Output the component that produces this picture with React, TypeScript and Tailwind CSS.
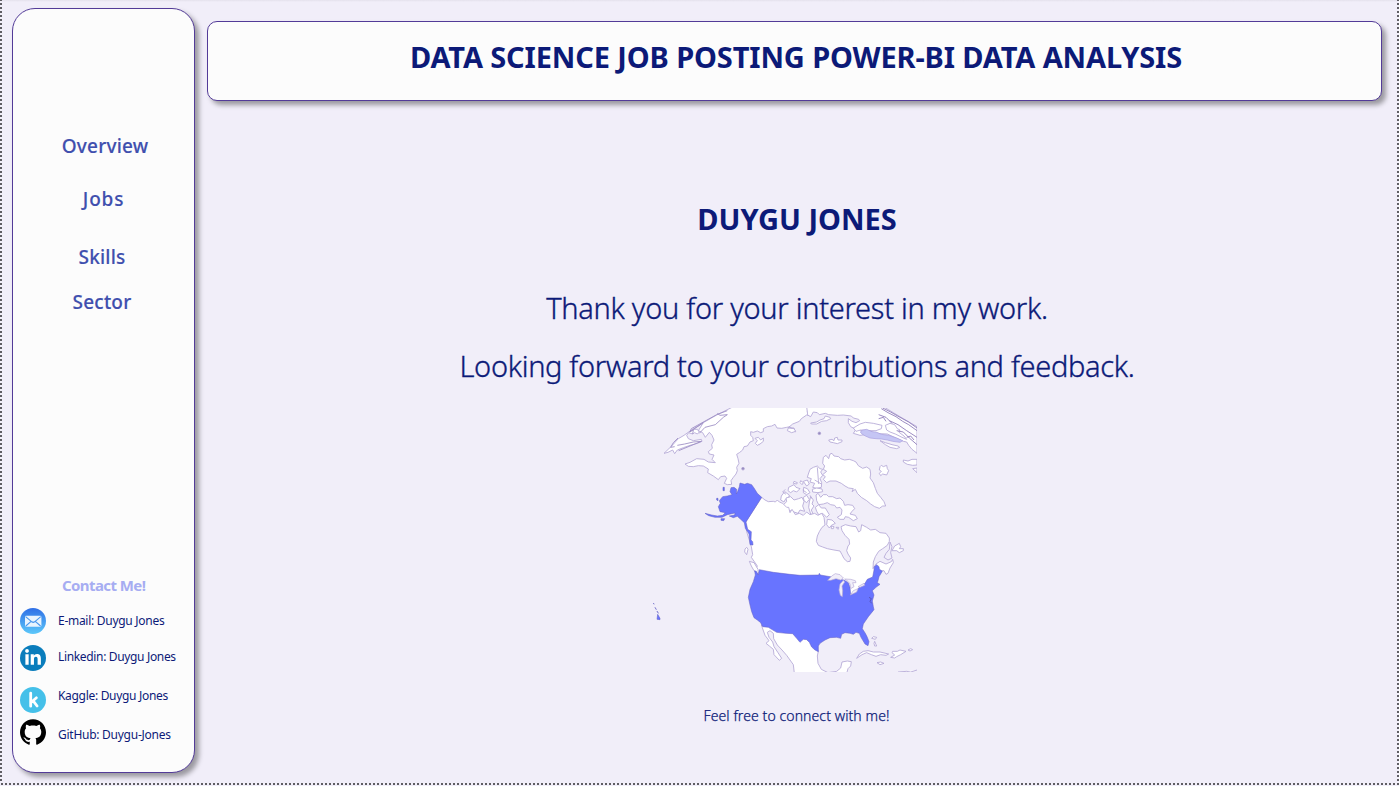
import { FaLinkedinIn } from "react-icons/fa";

const navItems = [
  { label: "Overview", cls: "mt-[123px] pl-[3px] tracking-[0.2px]" },
  { label: "Jobs", cls: "mt-[25px] tracking-[0.8px]" },
  { label: "Skills", cls: "mt-[30px] pr-[3px] tracking-[0.2px]" },
  { label: "Sector", cls: "mt-[17px] pr-[3px] tracking-[0.2px]" },
];

const contacts = [
  { label: "E-mail: Duygu Jones", cls: "tracking-[-0.28px]" },
  { label: "Linkedin: Duygu Jones", cls: "mt-[16px] tracking-[-0.34px]" },
  { label: "Kaggle: Duygu Jones", cls: "mt-[19px] tracking-[-0.31px]" },
  { label: "GitHub: Duygu-Jones", cls: "mt-[19px] tracking-[-0.26px]" },
];

function MailIcon() {
  return (
    <svg viewBox="0 0 26 26" className="size-[26px]">
      <defs>
        <linearGradient id="mail" x1="0" y1="0" x2="0" y2="1">
          <stop offset="0" stopColor="#2f6fe6" />
          <stop offset="1" stopColor="#5cc8fa" />
        </linearGradient>
      </defs>
      <circle cx="13" cy="13" r="13" fill="url(#mail)" />
      <rect x="5" y="7.7" width="16.4" height="11" rx="1.4" fill="#e9f4fe" />
      <path d="M5.6 8.6l6.2 5.2q1.4 1.1 2.8 0l6.2-5.2M5.8 18l5.3-4.7M20.6 18l-5.3-4.7" fill="none" stroke="#4796ee" strokeWidth="1.1" />
    </svg>
  );
}

function KaggleIcon() {
  return (
    <svg viewBox="0 0 26 26" className="size-[26px]">
      <circle cx="13" cy="13" r="13" fill="#45c0e9" />
      <path d="M10.7 6.2v13M16.4 10.8l-5 4.4M13.2 13.8l3.9 5.2" fill="none" stroke="#fff" strokeWidth="2.8" strokeLinecap="round" />
    </svg>
  );
}

function GithubIcon() {
  return (
    <svg viewBox="0 0 24 24" className="size-[26px]" fill="#000">
      <path d="M12 .297c-6.63 0-12 5.373-12 12 0 5.303 3.438 9.8 8.205 11.385.6.113.82-.258.82-.577 0-.285-.01-1.04-.015-2.04-3.338.724-4.042-1.61-4.042-1.61C4.422 18.07 3.633 17.7 3.633 17.7c-1.087-.744.084-.729.084-.729 1.205.084 1.838 1.236 1.838 1.236 1.07 1.835 2.809 1.305 3.495.998.108-.776.417-1.305.76-1.605-2.665-.3-5.466-1.332-5.466-5.93 0-1.31.465-2.38 1.235-3.22-.135-.303-.54-1.523.105-3.176 0 0 1.005-.322 3.3 1.23.96-.267 1.98-.399 3-.405 1.02.006 2.04.138 3 .405 2.28-1.552 3.285-1.23 3.285-1.23.645 1.653.24 2.873.12 3.176.765.84 1.23 1.91 1.23 3.22 0 4.61-2.805 5.625-5.475 5.92.42.36.81 1.096.81 2.22 0 1.606-.015 2.896-.015 3.286 0 .315.21.69.825.57C20.565 22.092 24 17.592 24 12.297c0-6.627-5.373-12-12-12" />
    </svg>
  );
}

function GlobeMap() {
  return (
    <svg viewBox="0 24 831 792" className="h-[264px] w-[277px]">
      <g fill="#fff" stroke="#b5a9d6" strokeWidth="2.6" strokeLinejoin="round">
        {/* Siberia and northern Russia */}
        <path d="M280 20L230 45 190 68 150 93 132 106 115 116 95 138 72 160 84 157 98 150 104 161 112 150 130 143 150 136 172 130 186 124 184 118 160 122 145 116 140 106 146 98 158 102 164 98 172 102 178 96 172 88 160 88 190 68 175 92 188 98 196 112 208 97 216 106 222 120 215 134 217 145 205 155 208 162 222 165 216 178 222 184 226 188 205 186 192 178 170 176 150 187 135 192 145 199 160 200 175 197 190 198 205 207 203 218 220 228 235 239 242 230 255 228 260 235 253 250 262 254 275 253 273 242 280 232 288 222 292 212 290 202 297 190 294 176 290 163 298 158 308 150 312 140 322 138 330 126 340 122 338 112 332 106 332 95 340 97 352 93 362 98 370 95 370 86 382 80 395 78 405 73 411 84 425 85 440 82 450 80 460 92 466 96 462 84 445 83 458 72 478 64 484 56 500 45 512 48 502 36 504 20Z" />
        {/* northern Europe up to the limb of the globe */}
        <path d="M500 20L503 45 512 50 520 36 532 38 538 44 556 40 566 44 592 46 610 45 634 48 640 54 656 58 659 62 648 68 636 64 625 56 625 68 632 80 648 88 640 100 660 106 675 104 665 97 662 90 680 90 700 97 720 101 742 102 770 115 790 124 800 126 806 136 816 148 831 160V80L790 56 760 38 730 20Z" />
        <path d="M640 84L660 72 676 67 700 70 726 76 724 86 708 92 688 92 662 90 648 94Z" />
        <path d="M720 122L736 128 756 134 774 138 779 142 770 146 750 142 736 134Z" />
        <path d="M736 76L750 70 764 74 772 86 780 90 776 96 792 108 800 118 786 112 766 102 750 96 740 90Z" />
        <path d="M724 26L744 38 768 50 788 64 806 74 831 92M728 24L752 36 780 52 806 66 831 84M716 44L738 52 756 70M748 62L774 74 800 92 831 112M770 92L790 96 808 114 831 134M800 112L812 108 822 120M716 56L730 52 738 64" fill="none" stroke="#8c7ab8" />
        <path d="M104 140L92 142 100 128 114 114M190 68L150 95 154 86 230 44 262 32M148 96L160 90 158 102M178 100L195 82 226 74 250 52 262 44 240 46 232 40M116 152L150 138 184 124 160 126 134 132 112 136" fill="none" stroke="#9c8dc4" />
        <path d="M790 180L804 183 816 178 831 178V195L818 196 802 193 790 186ZM818 206L831 204V218Z" />
        <path d="M512 69L530 66 540 60 552 56 556 48 570 52 572 56 560 62 545 64 530 72 514 72ZM445 84L462 86 467 94 455 98 442 92Z" />
        <path d="M345 115L355 112 362 120 370 114 370 124 360 132 352 136 346 130 352 122Z" />
        {/* Svalbard and Iceland */}
        <path d="M566 120L576 118 582 122 584 114 592 112 594 120 606 120 606 125 592 131 580 128 570 126Z" />
        <path d="M720 200L724 196 730 200 740 196 742 206 746 212 740 225 728 222 722 227 718 220 724 214 718 210Z" />
        <circle cx="538" cy="100" r="4" fill="#9489bd" />
        <circle cx="309" cy="206" r="4" fill="#9489bd" />
        {/* Greenland */}
        <path d="M548 190L550 172 558 166 566 176 570 162 576 160 582 168 596 170 602 176 614 180 628 178 640 182 648 186 655 197 668 205 680 201 690 208 692 222 690 234 700 248 706 265 712 280 722 292 732 305 737 318 728 318 718 325 704 320 692 312 680 302 664 292 652 280 646 268 636 275 640 266 626 264 615 258 604 250 588 243 570 243 560 248 550 238 556 230 548 224 560 214 550 208 554 198Z" />
        {/* Arctic archipelago */}
        <path d="M505 222L510 208 520 202 532 198 540 206 548 208 542 216 548 226 540 236 545 248 544 262 530 265 518 262 524 250 510 246 514 236 502 232Z" />
        <path d="M517 268L530 264 546 267 548 275 534 278 518 276ZM491 262L502 266 510 278 500 284 490 278ZM446 262L462 254 468 262 480 266 470 276 460 272 452 278 444 272ZM490 244L502 240 508 252 500 258ZM462 244L472 248 470 252 460 250ZM482 242L490 248 486 254 480 248Z" />
        <path d="M424 288L434 275 448 285 446 293 436 298 432 306 422 300Z" />
        <path d="M426 318L440 305 438 294 452 290 462 300 476 296 486 292 492 304 488 318 494 334 480 330 474 340 462 336 452 332 444 336 434 326Z" />
        <path d="M490 292L500 286 508 298 500 308 492 302ZM512 290L520 300 516 312 522 318 514 330 520 344 512 342 506 322 508 306ZM526 322L536 314 544 324 556 324 568 344 560 352 548 340 536 344 530 334Z" />
        <path d="M528 285L534 280 542 292 550 284 560 284 566 290 578 290 590 296 600 294 610 304 614 316 624 314 638 316 644 326 636 334 630 342 646 346 652 356 640 362 626 352 616 350 612 358 600 358 592 352 604 344 606 330 600 322 590 324 584 316 572 314 562 308 550 312 536 314 530 302Z" />
        <path d="M562 358L576 360 586 370 574 376 568 384 560 374ZM574 378L582 380 580 386 574 386ZM588 382L596 382 594 388Z" />
        {/* Canada */}
        <path d="M365 292L375 300 385 305 400 304 406 306 412 300 418 306 428 310 440 322 446 322 450 338 456 328 466 344 478 340 490 346 500 336 510 344 524 340 534 346 545 340 552 352 555 375 546 382 538 395 532 408 529 424 535 436 548 441 562 446 582 450 600 453 606 464 612 476 622 485 630 484 632 474 624 462 620 452 624 438 629 432 627 418 615 406 606 392 603 380 616 374 632 378 648 380 656 396 662 392 665 374 680 382 692 390 706 388 720 398 738 400 748 414 748 424 742 436 728 446 716 454 706 470 700 486 699 506 708 492 720 484 738 492 754 485 758 478 760 488 750 504 744 520 738 523 732 512 727 512 700 540 632 592 500 560 344 515 352 498 334 472 338 464 334 440 320 395 316 367Z" />
        <path d="M750 426L756 440 752 458 756 474 744 480 732 472 738 460 748 448Z" fill="#f1eef9" />
        <path d="M764 438L778 430 782 440 778 446 790 446 790 452 778 458 770 452 756 452Z" />
        <path d="M438 283L428 276 436 268M532 202L536 252M524 240L544 252M510 286L516 296M488 270L500 278" fill="none" />
        {/* Mexico and the Caribbean */}
        <path d="M364 675L375 706 387 722 378 730 388 738 400 748 402 764 418 781 425 775 414 758 402 740 398 726 387 712 382 697 390 692 400 700 401 716 412 735 426 750 440 766 450 780 460 794 463 820H620L624 806 632 798 634 785 622 783 606 786 602 804 590 814 564 818 544 808 534 790 532 768 535 753 500 700Z" />
        <path d="M650 775L658 762 670 754 684 752 700 756 720 756 746 762 738 766 722 764 708 769 694 764 680 758 666 764ZM752 772L764 765 756 758 758 754 772 754 780 750 798 754 782 764 770 770 764 774ZM711 788L722 786 732 790 720 794ZM804 750L812 746 818 749 810 753ZM695 715L706 718 710 712 700 710ZM704 724L710 738 704 738 702 730ZM774 816L800 814 812 816 831 810" />
        <path d="M315 447L320 442 324 448 320 464 314 456ZM328 484L342 488 354 508 355 523 342 512 334 498Z" />
      </g>
      <path d="M661 96L668 90 680 88 696 95 708 96 724 103 746 106 770 114 788 122 780 127 758 124 742 120 724 117 708 116 690 114 676 108 666 102Z" fill="#c5c5f4" stroke="#a89fe0" strokeWidth="2" />
      <g fill="#6874ff" stroke="#6460c4" strokeWidth="1.6" strokeLinejoin="round">
        <path d="M344 512L349 514 355 525 358 509 400 517 450 523 480 526 536 525 538 520 541 525 576 531 564 540 586 536 612 540 625 548 630 562 632 583 646 577 658 562 675 550 682 538 698 531 702 510 703 500 710 494 717 500 718 508 727 513 722 522 717 530 714 542 712 548 720 553 708 562 697 572 702 585 697 603 700 620 702 629 685 650 670 672 667 686 676 700 682 712 687 725 684 737 675 732 663 712 658 700 648 697 640 703 630 700 615 698 605 703 602 715 590 712 570 713 555 720 540 730 535 738 535 755 525 750 515 741 508 727 500 719 490 718 480 727 470 715 458 701 438 700 410 697 385 682 368 680 362 668 352 660 342 653 335 635 330 615 325 592 330 568 340 545 346 525Z" />
        <path d="M365 292L352 280 342 264 335 254 322 250 314 253 300 249 298 260 293 274 289 282 290 268 282 262 273 263 270 275 276 284 262 288 248 290 238 302 241 310 235 320 240 335 256 338 248 346 232 348 215 345 195 340 206 347 225 352 246 352 262 344 285 339 284 345 268 348 280 353 292 349 302 358 313 368 316 385 327 402 330 434 339 435 338 425 333 420 334 395 323 388 318 366Z" />
        <path d="M243 356L254 356 251 362 243 361ZM249 262H253V272H249ZM230 295H234V302L230 300ZM39 610L43 612ZM45 622L49 629 46 624ZM51 633L55 640ZM53 643L60 655 60 659 51 658Z" />
      </g>
      {/* Great Lakes */}
      <g fill="#f1eef9" stroke="#b5a9d6" strokeWidth="2">
        <path d="M563 541L575 528 586 521 600 524 610 534 602 540 588 536 572 541ZM610 541L600 552 597 570 601 586 607 590 608 572 606 558 614 546ZM614 537L632 538 646 542 648 548 638 548 642 560 632 566 630 552 624 544ZM631 585L640 572 654 566 650 576ZM654 560L672 550 674 556 660 562Z" />
      </g>
      <path d="M687 592L694 596 690 604 695 610" fill="none" stroke="#4b459a" strokeWidth="2" />
    </svg>
  );
}

export default function App() {
  return (
    <div className="relative flex h-[786px] w-[1399px] overflow-hidden bg-[#f1eef9] font-['Noto_Sans',sans-serif] text-[#0c1a78]">
      <aside className="ml-3 mt-2 flex h-[765px] w-[183px] shrink-0 flex-col rounded-[23px] border border-[#533b98] bg-[#fcfcfc] shadow-[4px_4px_5px_rgba(0,0,0,0.36)]">
        <nav className="flex flex-col text-center text-[19px] font-medium leading-7 text-[#3f4fae] [-webkit-text-stroke:0.15px_#3f4fae]">
          {navItems.map((n) => (
            <a key={n.label} className={n.cls}>{n.label}</a>
          ))}
        </nav>
        <h2 className="mt-[259px] pl-[49px] text-[15px] font-bold leading-5 tracking-[-0.58px] text-[#a6adf2]">Contact Me!</h2>
        <div className="flex pl-[6.5px] pt-[13px]">
          <div className="flex w-[38.5px] flex-col">
            <MailIcon />
            <div className="mt-[10.5px] flex size-[26.5px] items-center justify-center rounded-full bg-[#0a7dbc] text-white">
              <FaLinkedinIn className="size-[18px]" />
            </div>
            <div className="mt-[16px]"><KaggleIcon /></div>
            <div className="mt-[6px]"><GithubIcon /></div>
          </div>
          <div className="flex flex-col whitespace-nowrap pt-[3px] text-[12px] leading-5">
            {contacts.map((c) => (
              <a key={c.label} className={c.cls}>{c.label}</a>
            ))}
          </div>
        </div>
      </aside>
      <main className="ml-3 flex w-[1175px] flex-col">
        <header className="mt-[21px] flex h-20 items-start justify-center rounded-[10px] border border-[#533b98] bg-[#fcfcfc] pt-[15px] shadow-[4px_4px_5px_rgba(0,0,0,0.36)]">
          <h1 className="whitespace-nowrap pl-[3px] text-[29px] font-bold leading-10 tracking-[-0.13px]">DATA SCIENCE JOB POSTING POWER-BI DATA ANALYSIS</h1>
        </header>
        <section className="flex flex-col items-center whitespace-nowrap pl-[5px] pt-[98px]">
          <h2 className="text-[29px] font-bold leading-10">DUYGU JONES</h2>
          <p className="mt-[49px] text-[29px] font-light leading-10 tracking-[-0.28px] [-webkit-text-stroke:0.35px_#0c1a78]">Thank you for your interest in my work.</p>
          <p className="mt-[18px] text-[29px] font-light leading-10 tracking-[-0.32px] [-webkit-text-stroke:0.35px_#0c1a78]">Looking forward to your contributions and feedback.</p>
          <div className="mt-[22px] mr-[37px]"><GlobeMap /></div>
          <p className="mt-[34px] mr-[1px] text-[14px] font-light leading-5 tracking-[0.1px] [-webkit-text-stroke:0.25px_#0c1a78]">Feel free to connect with me!</p>
        </section>
      </main>
      <div className="absolute inset-x-0 top-0 h-[2px] bg-gradient-to-b from-[#e4e1ec] to-[#f1eef9]" />
      <div className="absolute left-0 top-0 h-[785px] w-[2px] bg-[repeating-linear-gradient(to_bottom,#5f5d63_0_1px,#f1eef9_1px_3px,#5f5d63_3px_4px)]" />
      <div className="absolute right-0 top-0 h-[785px] w-[2px] bg-[repeating-linear-gradient(to_bottom,#5f5d63_0_1px,#f1eef9_1px_3px,#5f5d63_3px_4px)]" />
      <div className="absolute left-0 top-[783px] h-[2px] w-full bg-[repeating-linear-gradient(to_right,#f1eef9_0_1px,#5f5d63_1px_3px,#f1eef9_3px_4px)]" />
    </div>
  );
}
